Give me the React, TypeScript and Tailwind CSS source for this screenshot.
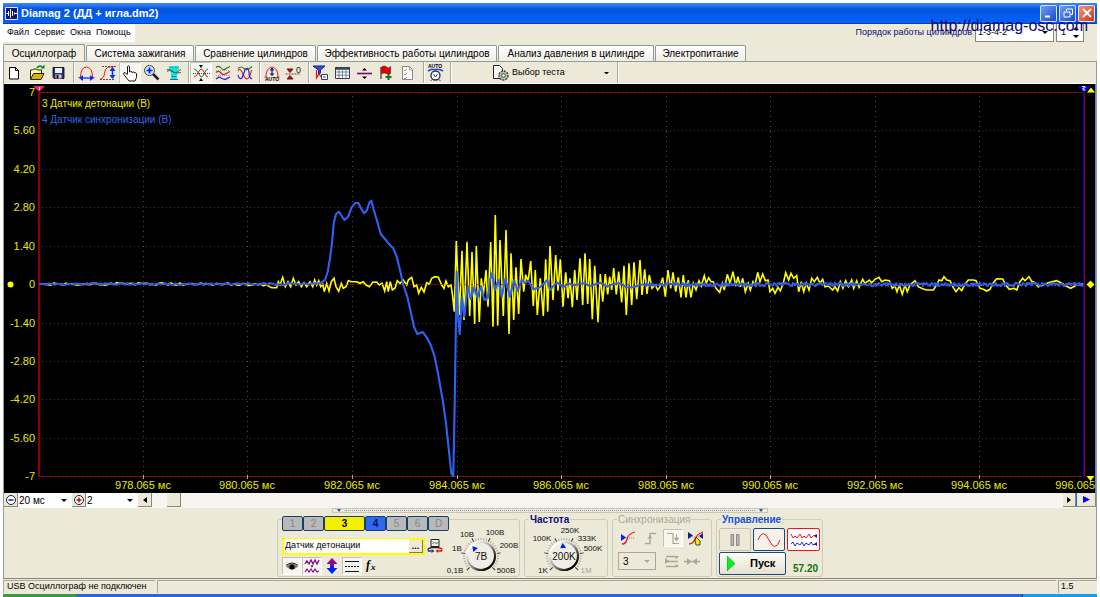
import type { ReactNode } from "react";
import { clsx } from "clsx";

type Pt = [number, number];

/* Samples are stored in thirds of a pixel, relative to an origin on the plot. */
const decode = (ox: number, oy: number, data: string): Pt[] =>
  data
    .trim()
    .split(/\s+/)
    .map((pair) => {
      const [x, y] = pair.split(",").map(Number);
      return [ox + x / 3, oy + y / 3];
    });

const noise = (from: number, to: number, mid: number, amp: number, step: number): Pt[] => {
  const out: Pt[] = [];
  let seed = 7;
  for (let x = from; x <= to; x += step) {
    seed = (seed * 73 + 41) % 997;
    out.push([x, mid + (seed / 997 - 0.5) * 2 * amp]);
  }
  return out;
};

const join = (pts: Pt[]) => pts.map(([x, y]) => `${x.toFixed(1)},${y.toFixed(1)}`).join(" ");

const knock = join([
  ...noise(39, 258, 284, 1.4, 3),
  ...decode(260, 190, "0,282 10,287 20,285 35,293 50,293 55,275 60,285 68,262 76,290 84,275 92,290 100,265 108,285 116,275 124,290 132,278 140,290 150,275 158,290 164,270 170,285 176,272 182,290 188,283 193,305 200,280 207,303 214,275 222,265 228,290 236,304 244,280 250,295 258,290 265,272 275,275 290,275 300,280 310,275 318,285 328,290 338,277 350,276 358,285 366,280 374,303 380,275 385,305 391,275 397,300 405,295 412,272 420,280 430,270 440,285 445,270 455,262 462,290 470,285 476,310 484,292 492,306 500,278 508,283 515,265 525,260 535,262 545,285"),
  ...decode(440, 200, "12,265 18,243 25,260 33,255 38,290 43,335 49,123 58,345 66,152 72,360 81,125 89,348 96,156 104,372 109,138 118,366 124,235 130,285 138,210 144,320 152,126 159,380 166,45 173,377 180,120 190,348 198,90 207,402 213,160 221,360 228,202 236,342 243,177 251,275 257,224 264,245 272,183 280,318 286,210 292,345 301,235 310,348 317,178 323,335 330,138 339,300 347,165 354,272 361,178 369,320 377,217 384,295 390,235 397,322 404,210 411,300 420,175 428,315 435,160 443,312 449,177 457,358 464,197 474,367 481,222 488,305 496,222 503,283 509,230 515,270 521,204 529,283 536,215 545,307 552,197 559,345 567,190 575,315 582,187 590,298"),
  ...decode(640, 240, "0,60 6,165 14,88 21,162 28,105 36,145 46,135 53,150 60,140 68,113 76,170 84,90 92,145 99,97 107,155 115,112 123,172 130,105 138,172 145,120 153,172 160,130 168,150 177,122 184,138 193,107 199,130 206,113 213,125 220,125 228,145 239,157 247,130 253,150 262,103 270,130 279,95 287,138 294,110 301,140 308,115 316,155 325,130 331,150 339,125 345,135 353,97 360,125 368,102 376,122 384,120 390,155 398,145 405,160 414,142 421,152 430,130 437,98 446,120 453,100 461,115 470,107 476,155 484,125 491,155 499,130 507,150 515,115 523,125 532,112 540,130 548,118 555,140 565,138 578,150 585,140 593,153 601,125 609,145 617,122 625,140 635,120 641,145 650,122 657,142 668,118 675,130 688,120 695,128 705,118 717,112 725,125 735,120 748,122 757,145 765,138 771,155 778,135 787,163 795,135 802,155 810,135 825,122 835,140 848,146 860,150 880,150 890,135 897,120 905,122 912,110 920,120 930,122 938,140 948,155 957,143 965,152 975,133 985,120 1000,120 1008,122 1020,145 1030,148 1040,153 1050,148 1060,128 1070,116 1088,117 1097,135 1108,148 1122,145 1130,150 1140,125 1148,115 1155,122 1167,110 1175,124 1185,128 1195,140 1210,135 1225,128 1250,122 1265,130 1278,138 1292,145 1310,135 1330,132"),
]);

const sync = join([
  ...noise(39, 316, 284, 0.9, 2),
  ...decode(260, 190, "180,280 195,270 203,245 210,205 216,160 221,100 228,72 237,65 245,78 253,90 263,82 275,52 285,40 295,38 303,55 312,70 320,62 328,38 334,32 340,55 352,95 362,132 375,147 388,163 400,175 410,200 420,240 430,285 442,320 452,365 462,410 472,432 488,426 500,442 512,465 524,500 535,555 548,630 558,700 566,775 574,850 580,858 584,640"),
  ...decode(440, 200, "50,215 54,345 59,402 66,290 73,350 83,258 92,297 103,262 112,293 123,258 133,300 143,295 150,240 156,220 165,270 175,240 185,290 196,237 210,290 222,240 233,272 245,240 255,250 265,242 280,268 300,262 312,250 322,240 330,270 340,258 352,248 370,262 385,250 400,256 430,250 450,258 480,248 500,260 520,252 540,250 560,262 580,262 600,255"),
  ...noise(642, 1083, 284.5, 1.7, 1),
]);

const columns = [143, 247, 352, 457, 561, 666, 770, 875, 979];
const times = ["978.065", "980.065", "982.065", "984.065", "986.065", "988.065", "990.065", "992.065", "994.065"];
const levels: [string, number][] = [
  ["7", 92], ["5.60", 130], ["4.20", 169], ["2.80", 207], ["1.40", 246], ["0", 284],
  ["-1.40", 323], ["-2.80", 361], ["-4.20", 399], ["-5.60", 438], ["-7", 476],
];

function Plot() {
  return (
    <svg viewBox="4 84 1092 409" className="block h-auto w-full bg-black" role="img" aria-label="Осциллограмма">
      <g stroke="#4c4c4c" strokeDasharray="1 4">
        {columns.map((x) => <path key={x} d={`M${x + 0.5} 96V476`} />)}
      </g>
      <g stroke="#383838" strokeDasharray="1 3">
        {levels.slice(1, 10).map(([l, y]) => <path key={l} d={`M42 ${y + 0.5}H1082`} />)}
      </g>
      <path d="M39 284.5H1084" stroke="#a00000" strokeDasharray="4 2" />
      <path d="M39 92.5H1084M39 476.5H1084" stroke="#8a0000" />
      <path d="M39 92.5H1084M39 476.5H1084" stroke="#555" strokeDasharray="1 3" opacity=".6" />
      <path d="M39 92V477" stroke="#900000" strokeWidth="2" />
      <g stroke="#aaa">
        {columns.map((x) => <path key={x} d={`M${x + 0.5} 475v4`} />)}
      </g>
      <path d="M1083.5 90V477" stroke="#0000d0" />
      <path d="M1084.5 90V477" stroke="#900000" />
      <polyline points={knock} fill="none" stroke="#ffff00" strokeWidth="1.6" />
      <polyline points={sync} fill="none" stroke="#2f62f4" strokeWidth="2.1" strokeLinejoin="round" />
      <path d="M39 284.5H1084" stroke="#a00000" strokeDasharray="2 4" opacity=".6" />
      <path d="M33 86h12l-6 6z" fill="#f0246c" />
      <path d="M39.5 87v3" stroke="#fff" />
      <path d="M1078 86h12l-6 6z" fill="#0000ff" />
      <path d="M1082 86.500h3v1.500h-2v2h2.500" stroke="#fff" fill="none" strokeWidth=".9" />
      <path d="M1087 92.500h8l-4-5zM1086.500 476h8l-4 5z" fill="#ff0" />
      <circle cx="10.500" cy="284.500" r="3" fill="#ff0" />
      <path d="M1090.500 280.500l4 4-4 4-4-4z" fill="#ff0" />
      <g fill="#e9e900" fontFamily="'Liberation Sans', sans-serif" fontSize="11">
        {levels.map(([l, y]) => (
          <text key={l} x="35" y={y + 4} textAnchor="end">{l}</text>
        ))}
        {times.map((t, i) => (
          <text key={t} x={columns[i]} y="489" textAnchor="middle">{t} мс</text>
        ))}
        <text x="1095" y="489" textAnchor="end">996.065</text>
      </g>
      <g fontFamily="'Liberation Sans', sans-serif" fontSize="10">
        <text x="42" y="107" fill="#e9e900">3 Датчик детонации (В)</text>
        <text x="42" y="123" fill="#3464e8">4 Датчик синхронизации (В)</text>
      </g>
      <path d="M1095.500 84V493" stroke="#5d86d8" />
    </svg>
  );
}

function Tool({ label, pressed, children }: { label: string; pressed?: boolean; children: ReactNode }) {
  return (
    <button
      type="button"
      aria-label={label}
      className={clsx("h-[22px] w-[22px] shrink-0", pressed && "border border-[#c9c6b6] border-r-white border-b-white bg-[#f7f6f0]")}
    >
      <svg viewBox="0 0 22 22" className={clsx("h-[22px] w-[22px]", pressed && "-m-px")} fill="none">
        {children}
      </svg>
    </button>
  );
}

const Sep = () => (
  <span className="flex h-[21px] w-[5px] shrink-0 justify-end">
    <span className="w-[2px] border-l border-[#aca899] bg-white" />
  </span>
);

function Toolbar() {
  return (
    <div className="flex h-[23px] items-start border-t border-b border-t-[#919b9c] border-b-white bg-[#ece9d8]">
      <Tool label="Новый">
        <path d="M5.500 5.500h6l3 3v8.500h-9z" fill="#fff" stroke="#000" />
        <path d="M11.500 5.500v3h3" stroke="#000" />
      </Tool>
      <Tool label="Открыть">
        <path d="M4.500 17V8h2l1-1h3l1 1h4v3" fill="#fff6a0" stroke="#222" />
        <path d="M4.500 17.500l3-6h10.500l-3 6z" fill="#d8b400" stroke="#222" />
        <path d="M11 6q2-3 5-1.500" stroke="#087a20" strokeWidth="1.500" />
        <path d="M14.500 6.500h4v-4z" fill="#087a20" />
      </Tool>
      <Tool label="Сохранить">
        <path d="M5 5.500h11V16.500H6l-1-1z" fill="#30327a" stroke="#000" strokeWidth=".8" />
        <path d="M7 6h7v5H7z" fill="#e8f0ff" />
        <path d="M7.500 12.500h6v4h-6z" fill="#ccc" />
        <path d="M8.500 13h2v3.500h-2z" fill="#111" />
      </Tool>
      <Sep />
      <Tool label="Длительность">
        <path d="M3.500 15.500h2q0-10 6-10.500 6 .500 6 10.500h2" stroke="#f01818" />
        <path d="M5 16h13" stroke="#0030ff" strokeWidth="1.300" />
        <path d="M8 13L4 16l4 3zM15 13l4 3-4 3z" fill="#0030ff" />
      </Tool>
      <Tool label="Амплитуда">
        <path d="M5 4.500h14M3 17.500h14" stroke="#555" strokeDasharray="2 1" />
        <path d="M3 17q4 0 4.500-5.500T12 5h5" stroke="#f01818" />
        <path d="M15.500 6v10" stroke="#0030ff" strokeWidth="1.500" />
        <path d="M12.500 9l3-4 3 4zM12.500 13l3 4 3-4z" fill="#0030ff" />
      </Tool>
      <Tool label="Рука" pressed>
        <path d="M8.500 12V4.500q1-1.500 2 0V10q1-1.500 2.500 0v.500q1-1.200 2.500 0v.500q1.500-.800 2 .500v4l-1.500 3.500h-6L6 14q-2.500-2.500-1-3.300t3.500 2.300" fill="#fff" stroke="#000" strokeWidth=".9" />
      </Tool>
      <Tool label="Увеличить">
        <path d="M12 12l5.500 5.500" stroke="#222" strokeWidth="2.500" />
        <circle cx="8.500" cy="8.500" r="5" fill="#c8e8ff" stroke="#444" />
        <path d="M5.500 8.500h6M8.500 5.500v6" stroke="#0020e0" strokeWidth="1.700" />
      </Tool>
      <Tool label="Фильтр сигнала">
        <path d="M6 4h10v3l-2 4v6H8v-6L6 7z" fill="#18e0e8" />
        <path d="M4 9.500q3-3 5.500 0t8.500-2" stroke="#e02020" />
        <path d="M4 7.500q3 0 5.500 2t8.500 1" stroke="#108030" strokeWidth="1.200" />
        <path d="M7 17.500h8M8.500 5.500h1M12.500 5.500h1M9 14.500h4" stroke="#057a90" />
      </Tool>
      <Sep />
      <Tool label="Свести лучи" pressed>
        <path d="M4 7q2 0 4 3.500T11 15q2 0 3.500-4T18 7" stroke="#168030" />
        <path d="M4 15q2 0 4-4t3-4q2 0 3.500 4t3.500 4" stroke="#f02020" />
        <path d="M3 11.500h17" stroke="#444" strokeDasharray="1 1" />
        <path d="M9 3h4l-2 3zM9 19h4l-2-3z" fill="#000" />
      </Tool>
      <Tool label="Развести лучи">
        <path d="M4 5.500q2.500-2.500 5 .500t5 .500l4-2" stroke="#168030" strokeWidth="1.100" />
        <path d="M4 10.500q2.500-2.500 5 .500t5 .500l4-2" stroke="#f02020" strokeWidth="1.300" />
        <path d="M4 17l3-2 3 1.500 3 1 5-2.500" stroke="#2020e0" strokeWidth="1.200" />
        <path d="M4 8.500h14M4 13.500h14" stroke="#888" strokeDasharray="1 1" strokeWidth=".7" />
      </Tool>
      <Tool label="Наложить лучи">
        <path d="M4 6.500q3-3 6 0t8-2" stroke="#168030" strokeWidth="1.100" />
        <path d="M4 9q2-4 4.500 2t4.500 6q3-1 4.500-9" stroke="#f02020" strokeWidth="1.200" />
        <path d="M4 13q1 5 4 3l3-8q3-4 4 2 0 6 3 7" stroke="#2020e0" strokeWidth="1.200" />
      </Tool>
      <Sep />
      <Tool label="Автомасштаб">
        <path d="M3.500 15h1.500q0-9 6-10 6 1 6 10h1.500" stroke="#f02020" />
        <path d="M11 6v7" stroke="#102090" strokeWidth="1.200" />
        <path d="M8.500 8.500L11 5.500l2.500 3zM8.500 11.500h5L11 14z" fill="#102090" />
        <text x="4" y="19" fontSize="5" fontWeight="bold" fill="#000" fontFamily="Liberation Sans">AUTO</text>
      </Tool>
      <Tool label="Установить ноль">
        <path d="M4 7h6l-3 3.500zM4 17h6l-3-3.500z" fill="#a01010" stroke="#8c1010" />
        <path d="M2.500 12h15" stroke="#444" strokeDasharray="2 1" />
        <text x="13" y="11" fontSize="9" fill="#222" fontFamily="Liberation Sans">0</text>
      </Tool>
      <Sep />
      <Tool label="Отбор">
        <path d="M3 4h12l-4.500 4v3l-2 1V8z" fill="#3048f0" stroke="#102090" />
        <path d="M6.500 8v8l2.500-4 3 4 1-4" stroke="#e01010" strokeWidth="1.200" />
        <path d="M11.500 12.500h6v5h-6z" fill="#fff" stroke="#204080" />
        <path d="M13 15h3" stroke="#555" />
      </Tool>
      <Tool label="Таблица">
        <path d="M3.500 5.500h14v11h-14z" fill="#fff" stroke="#2d4354" />
        <path d="M3 6.500h15" stroke="#2d4354" strokeWidth="2.500" />
        <path d="M7 6v10M10.500 6v10M14 6v10M3.500 10h14M3.500 13.200h14" stroke="#557085" strokeWidth=".8" />
      </Tool>
      <Tool label="Разделитель">
        <path d="M3 11.500h15" stroke="#800080" strokeWidth="1.600" />
        <path d="M8 8.500h5L10.500 6zM8 14.500h5L10.500 17z" fill="#000" />
      </Tool>
      <Tool label="Флаг">
        <path d="M5 5v12" stroke="#333" strokeWidth="1.200" />
        <path d="M5.500 5q3-2 5 0t4-.500v7q-2 1-4 0t-5 0z" fill="#e40000" stroke="#701010" strokeWidth=".6" />
        <path d="M9.500 15h6M12.500 12v6" stroke="#087a20" strokeWidth="2" />
      </Tool>
      <Tool label="Отчёт">
        <path d="M4.500 4.500h7l3 3v10h-10z" fill="#f8f8f8" stroke="#888" />
        <path d="M6 8l1 1 2-2M6 12l1 1 2-2M6 16l1 1 2-2M11.500 5v3h3" stroke="#888" strokeWidth=".8" />
      </Tool>
      <Sep />
      <Tool label="Автоизмерение">
        <text x="3" y="6" fontSize="5" fontWeight="bold" fill="#000" fontFamily="Liberation Sans">AUTO</text>
        <path d="M3 9l3-1.500h9L18 9" stroke="#2040e0" strokeWidth="1.500" />
        <circle cx="10.500" cy="13.500" r="4.500" fill="#fff" stroke="#234" strokeWidth="1.300" />
        <path d="M8.500 12l2 3 2-3M7 17.500L5.500 19M14 17.500l1.500 1.500" stroke="#2040e0" />
      </Tool>
      <Sep />
      <label className="ml-10 flex h-[22px] w-[122px] items-center">
        <svg viewBox="0 0 18 18" className="mr-[2px] h-[18px] w-[18px]" fill="none">
          <path d="M1.500 1.500h6l3 3v10h-9z" fill="#fff" stroke="#222" />
          <circle cx="11.500" cy="11.500" r="4.500" fill="#b8c4b0" stroke="#3c4c3c" strokeDasharray="2 1" strokeWidth="1.500" />
          <circle cx="11.500" cy="11.500" r="1.800" fill="#fff" stroke="#3c4c3c" />
        </svg>
        <Combo label="Тест" options={["Выбор теста"]} className="grow text-[9px]" arrow="right-[5px] w-[5px]" />
      </label>
      <Sep />
    </div>
  );
}

function Combo({ label, options, className, arrow, disabled }: { label: string; options: string[]; className?: string; arrow?: string; disabled?: boolean }) {
  return (
    <span className={clsx("relative flex h-full items-center", className)}>
      <select aria-label={label} disabled={disabled} className="h-full w-full appearance-none bg-transparent text-black outline-none">
        {options.map((o) => <option key={o}>{o}</option>)}
      </select>
      <svg viewBox="0 0 6 3" className={clsx("pointer-events-none absolute", arrow ?? "right-[5px] w-[6px]")}>
        <path d="M0 0h6L3 3z" fill={disabled ? "#aca899" : "#000"} />
      </svg>
    </span>
  );
}

const tabs: [string, string][] = [
  ["Система зажигания", "w-[108px]"],
  ["Сравнение цилиндров", "w-[121px]"],
  ["Эффективность работы цилиндров", "w-[180px]"],
  ["Анализ давления в цилиндре", "w-[156px]"],
  ["Электропитание", "w-[91px]"],
];

function WinButton({ label, close, children }: { label: string; close?: boolean; children: ReactNode }) {
  return (
    <button
      type="button"
      aria-label={label}
      className={clsx(
        "flex h-[17px] w-[17px] items-center justify-center rounded-[2px] border border-white/80",
        close ? "bg-linear-to-br from-[#f0937a] to-[#c93312]" : "bg-linear-to-br from-[#6f9cf5] to-[#1a48c8]",
      )}
    >
      <svg viewBox="0 0 12 12" className="h-3 w-3" fill="none" stroke="#fff">{children}</svg>
    </button>
  );
}

function Group({ title, titleClass, className, children }: { title?: string; titleClass?: string; className: string; children: ReactNode }) {
  return (
    <section className={clsx("relative h-[58px] shrink-0 rounded-[3px] border border-[#cfccba]", className)}>
      {title && (
        <h2 className={clsx("absolute -top-[5px] left-[4px] bg-[#ece9d8] px-px text-[10px] leading-[10px]", titleClass)}>{title}</h2>
      )}
      {children}
    </section>
  );
}

type DialLabel = { t: string; x: number; y: number; dim?: boolean };

function Dial({ label, value, marks, cx, width, pointer, className }: { label: string; value: string; marks: DialLabel[]; cx: number; width: number; pointer: number; className: string }) {
  const cy = 36;
  const ticks = Array.from({ length: 31 }, (_, i) => -135 + i * 9);
  return (
    <label className={clsx("relative block", className)}>
      <input type="range" aria-label={label} className="absolute inset-0 h-full w-full opacity-0" />
      <svg viewBox={`0 0 ${width} 57`} className="pointer-events-none block w-full">
        <defs>
          <linearGradient id={`ring-${cx}`} x1="0" y1="0" x2="1" y2="1">
            <stop offset="0.150" stopColor="#fff" />
            <stop offset="0.500" stopColor="#999" />
            <stop offset="0.850" stopColor="#000" />
          </linearGradient>
        </defs>
        {ticks.map((a, i) => (
          <path key={a} d={`M${cx} ${cy - 16}v${i % 6 ? -2 : -4}`} stroke={i % 6 ? "#aaa797" : "#333"} strokeWidth={1} transform={`rotate(${a} ${cx} ${cy})`} />
        ))}
        <circle cx={cx} cy={cy} r="14" fill="#f0eee4" stroke={`url(#ring-${cx})`} strokeWidth="2.200" />
        <path d={`M${cx - 3} ${cy - 8}h6l-3-5z`} fill="#0018ff" transform={`rotate(${pointer} ${cx} ${cy})`} />
        <g fontFamily="'Liberation Sans', sans-serif" textAnchor="middle" fill="#111">
          <text x={cx} y={cy + 4} fontSize="10">{value}</text>
          {marks.map((m) => (
            <text key={m.t} x={m.x} y={m.y} fontSize="8" fill={m.dim ? "#aaa797" : "#111"}>{m.t}</text>
          ))}
        </g>
      </svg>
    </label>
  );
}

const channels: [string, string][] = [
  ["1", "w-[21px] bg-[#b9b9b9] text-[#888]"],
  ["2", "w-[21px] bg-[#b9b9b9] text-[#888]"],
  ["3", "w-[41px] bg-[#f4ee00] font-bold text-black"],
  ["4", "w-[21px] bg-[#2f66f4] font-bold text-[#001050]"],
  ["5", "w-[21px] bg-[#b9b9b9] text-[#888]"],
  ["6", "w-[21px] bg-[#b9b9b9] text-[#888]"],
  ["D", "w-[21px] bg-[#b9b9b9] text-[#888]"],
];

function Glyph({ label, pressed, className, children }: { label: string; pressed?: boolean; className?: string; children: ReactNode }) {
  return (
    <button
      type="button"
      aria-label={label}
      className={clsx("flex h-[18px] w-[20px] items-center justify-center", pressed && "border border-[#c4c1b0] border-r-white border-b-white bg-[#f6f5ee]", className)}
    >
      <svg viewBox="0 0 18 16" className="h-4 w-[18px] shrink-0" fill="none">{children}</svg>
    </button>
  );
}

function ChannelGroup() {
  return (
    <Group className="flex w-[243px]">
      <div className="ml-[4px] flex w-[160px] flex-col">
        <div className="-mt-[4px] flex h-[15px] w-[167px] bg-[#ece9d8]">
          {channels.map(([n, c]) => (
            <button key={n} type="button" className={clsx("h-[15px] shrink-0 rounded-[2px] border border-[#16406a] text-[10px] leading-[12px]", c)}>{n}</button>
          ))}
        </div>
        <div className="mt-[6px] flex items-center">
          <div className="flex h-[17px] w-[143px] shrink-0 items-center border-2 border-[#ffff00] bg-white">
            <input aria-label="Имя канала" defaultValue="Датчик детонации" className="min-w-0 grow bg-white pl-px text-[9px] text-black outline-none" />
            <button type="button" className="flex h-[13px] w-[14px] items-center justify-center border-r border-b border-[#777] bg-[#ece9d8] text-[9px] leading-[6px] font-bold text-black">...</button>
          </div>
          <Glyph label="Датчик" className="shrink-0">
            <path d="M5 1.500h8v7H5z" fill="#eee" stroke="#222" />
            <path d="M6.500 6l2-2 2 2 1-2" stroke="#22a040" />
            <path d="M4.500 9.500h9" stroke="#222" strokeWidth="1.500" />
            <path d="M5 10q-4 0-2.500 3h3" stroke="#203080" strokeWidth="1.300" />
            <path d="M13 10q4 0 2.500 3h-3" stroke="#f01010" strokeWidth="1.300" />
            <path d="M5.500 11v4l3-2z" fill="#203080" />
            <path d="M12.500 11v4l-3-2z" fill="#f01010" />
          </Glyph>
        </div>
        <div className="mt-[2px] flex">
          <Glyph label="Видимость" pressed>
            <path d="M3 8.500q6-6 12 0-6 6-12 0z" fill="#777" />
            <circle cx="9" cy="9" r="2.500" fill="#000" />
            <path d="M3 7.500q6-5 12 0" stroke="#222" />
          </Glyph>
          <Glyph label="Сигналы" pressed>
            <path d="M2 6l2-3 2 3 2-4 2 4 2-4 2 4 2-4" stroke="#8c0a8c" strokeWidth="1.300" />
            <path d="M2 14l2-3 2 3 2-3 2 3 2-3 2 3 2-1" stroke="#8c0a8c" strokeWidth="1.200" />
            <path d="M7.500 7.500h3L9 9.500z" fill="#000" />
          </Glyph>
          <Glyph label="Смещение">
            <path d="M9 0l5.500 6H11v2H7V6H3.500z" fill="#8c0a8c" />
            <path d="M9 16l5.500-6H11V8H7v2H3.500z" fill="#0020ff" />
          </Glyph>
          <Glyph label="Линии" pressed>
            <path d="M2 3.500h14M2 13.500h14" stroke="#111" />
            <path d="M2 8.500h14" stroke="#111" strokeDasharray="2 1" />
          </Glyph>
          <Glyph label="Функция">
            <text x="3" y="11" fontSize="12" fontWeight="bold" fontStyle="italic" fill="#000" fontFamily="Liberation Serif">f</text>
            <text x="8" y="12" fontSize="9" fontWeight="bold" fontStyle="italic" fill="#000" fontFamily="Liberation Serif">x</text>
          </Glyph>
        </div>
      </div>
      <Dial
        className="w-[77px]"
        label="Предел измерения"
        value="7В"
        width={77}
        cx={39}
        pointer={-42}
        marks={[
          { t: "0,1В", x: 13, y: 53 }, { t: "1В", x: 15, y: 31 }, { t: "10В", x: 25, y: 17 },
          { t: "100В", x: 53, y: 15 }, { t: "200В", x: 67, y: 28 }, { t: "500В", x: 64, y: 53 },
        ]}
      />
    </Group>
  );
}

function ControlPanel() {
  return (
    <div className="flex h-[70px] flex-col items-center bg-[#ece9d8]">
      <div className="flex h-[5px] w-[436px] shrink-0 items-center justify-between border border-[#c9c6b6] px-1">
        <svg viewBox="0 0 4 3" className="w-1"><path d="M0 0h4L2 3z" fill="#1858b8" /></svg>
        <span className="mx-1 grow border-t border-dotted border-[#7f9fc4]" />
        <svg viewBox="0 0 4 3" className="w-1"><path d="M0 0h4L2 3z" fill="#1858b8" /></svg>
      </div>
      <div className="mt-[6px] flex justify-center gap-[4px]">
        <ChannelGroup />
        <Group title="Частота" titleClass="font-bold text-[#0a0a78]" className="w-[84px]">
          <Dial
            className="w-[82px]"
            label="Частота"
            value="200K"
            width={82}
            cx={39}
            pointer={-6}
            marks={[
              { t: "1K", x: 18, y: 53 }, { t: "100K", x: 17, y: 21 }, { t: "250K", x: 45, y: 13 },
              { t: "333K", x: 62, y: 21 }, { t: "500K", x: 68, y: 31 }, { t: "1M", x: 61, y: 53, dim: true },
            ]}
          />
        </Group>
        <Group title="Синхронизация" titleClass="text-[#aca899]" className="flex w-[100px] flex-col gap-[5px] px-[5px] pt-[9px]">
          <div className="flex justify-between">
            <Glyph label="Фронт">
              <path d="M2 8h14" stroke="#888" strokeDasharray="1 1" />
              <path d="M3 14q4 0 5-5t8-7" stroke="#f01818" strokeWidth="1.300" />
              <path d="M2 4l5 3.500-5 3.500z" fill="#0020ff" />
            </Glyph>
            <Glyph label="Нарастание">
              <path d="M3 13.500h5v-10h6" stroke="#aca899" strokeWidth="1.400" />
              <path d="M5.500 8.500h5L8 5z" fill="#aca899" />
            </Glyph>
            <Glyph label="Спад" pressed>
              <path d="M3 3.500h6v10h6" stroke="#aca899" strokeWidth="1.200" />
              <path d="M12.500 4v6M10.500 8l2 3 2-3z" stroke="#aca899" fill="#aca899" />
            </Glyph>
            <Glyph label="Захват">
              <path d="M1 7h14" stroke="#888" strokeDasharray="1 1" />
              <path d="M2 14q4 0 6-5t8-7" stroke="#f01818" strokeWidth="1.300" />
              <path d="M1 2l5 3.500-5 3.500zM16 3l-4 3 4 3z" fill="#102090" />
              <path d="M9 7l4 4v4h-4l-1-4z" fill="#ffe600" stroke="#222" strokeWidth=".8" />
            </Glyph>
          </div>
          <div className="flex items-center">
            <Combo label="Канал синхронизации" options={["3"]} disabled className="mr-[6px] h-[18px] w-[38px] border border-[#aca899] pl-[4px] text-[10px]" />
            <Glyph label="Уровень">
              <path d="M3 3.500h10M3 8.500h12M3 13.500h10" stroke="#aca899" strokeWidth="1.300" />
              <path d="M2 5l4 3-4 3zM11 3h5l-2.500 3zM11 14h5l-2.500-3z" fill="#aca899" />
            </Glyph>
            <Glyph label="Центр">
              <path d="M1 8.500h16" stroke="#aca899" strokeWidth="1.500" />
              <path d="M4 5l4.500 3.500L4 12zM14 5L9.500 8.500 14 12z" fill="#aca899" />
            </Glyph>
          </div>
        </Group>
        <Group title="Управление" titleClass="font-bold text-[#1552d8]" className="flex w-[107px] flex-col gap-px px-[2px] pt-[8px]">
          <div className="flex gap-[2px]">
            <button type="button" aria-label="Пауза" className="flex h-[23px] w-[32px] items-center justify-center rounded-[2px] border border-[#c4c1b0]">
              <svg viewBox="0 0 10 12" className="h-3 w-[10px]"><path d="M1 .500h2.500v11H1zM6.500.500H9v11H6.500z" fill="#bbb" stroke="#888" /></svg>
            </button>
            <button type="button" aria-label="Синус" className="flex h-[23px] w-[33px] items-center justify-center rounded-[2px] border border-[#1c4a74] bg-[#f4f2ea]">
              <svg viewBox="0 0 24 16" className="h-4 w-6" fill="none"><path d="M1 8Q6-5 12 8t11 0" stroke="#f01818" /></svg>
            </button>
            <button type="button" aria-label="Непрерывно" className="flex h-[23px] w-[33px] items-center justify-center rounded-[2px] border border-[#ff1010] bg-white">
              <svg viewBox="0 0 28 18" className="h-[18px] w-7" fill="none">
                <path d="M1 3l2 4 2-2 2 2 3-4 2 4 2-2 2 2 3-4 2 4 2-2 3-1" stroke="#f01818" />
                <path d="M1 13l2-2 2 4 2-3 3 2 2-3 2 4 2-3 3 2 2-3 2 3 3-1" stroke="#1828e0" />
                <path d="M27 3v4l-3-2zM27 11v4l-3-2z" fill="#102090" />
              </svg>
            </button>
          </div>
          <div className="flex items-end gap-[7px]">
            <button type="button" className="flex h-[23px] w-[67px] items-center rounded-[2px] border border-[#1c4a74] bg-linear-to-b from-[#fdfcf8] to-[#e4e0d0] pl-[7px] text-[11px] font-bold text-black">
              <svg viewBox="0 0 8 15" className="mr-[15px] h-[15px] w-2"><path d="M0 0l8 7.500L0 15z" fill="#00f020" stroke="#009a10" strokeWidth=".6" /></svg>
              Пуск
            </button>
            <output className="text-[10px] leading-[12px] font-bold text-[#107010]">57.20</output>
          </div>
        </Group>
      </div>
    </div>
  );
}

const smallButton = "flex h-[14px] items-center justify-center border-r border-b border-[#8a8778] bg-[#ece9d8]";

function ScrollRow() {
  return (
    <div className="flex h-[15px] items-start bg-[#f6f5ef] text-[10px]">
      <button type="button" aria-label="Сжать" className={clsx(smallButton, "w-[14px]")}>
        <svg viewBox="0 0 12 12" className="h-3 w-3" fill="none"><circle cx="6" cy="6" r="4.500" fill="#fff" stroke="#222" /><path d="M3.500 6h5" stroke="#1020c0" strokeWidth="1.500" /></svg>
      </button>
      <Combo label="Развёртка" options={["20 мс"]} className="h-[14px] w-[54px] bg-white pl-px" />
      <button type="button" aria-label="Растянуть" className={clsx(smallButton, "w-[14px]")}>
        <svg viewBox="0 0 12 12" className="h-3 w-3" fill="none"><circle cx="6" cy="6" r="4.500" fill="#fff" stroke="#222" /><path d="M3.500 6h5M6 3.500v5" stroke="#c01010" strokeWidth="1.500" /></svg>
      </button>
      <Combo label="Масштаб" options={["2"]} className="h-[14px] w-[52px] bg-white pl-px" />
      <button type="button" aria-label="Назад" className={clsx(smallButton, "w-[14px]")}>
        <svg viewBox="0 0 4 6" className="h-[6px] w-1"><path d="M4 0v6L0 3z" fill="#000" /></svg>
      </button>
      <div className="flex h-[14px] grow pl-[15px]">
        <button type="button" aria-label="Ползунок" className={clsx(smallButton, "w-[14px]")} />
      </div>
      <button type="button" aria-label="Вперёд" className={clsx(smallButton, "w-[13px]")}>
        <svg viewBox="0 0 4 6" className="h-[6px] w-1"><path d="M0 0v6l4-3z" fill="#000" /></svg>
      </button>
      <button type="button" aria-label="В конец" className={clsx(smallButton, "w-[20px] border-l border-l-[#1468e0]")}>
        <svg viewBox="0 0 7 7" className="h-[7px] w-[7px]"><path d="M0 0v7l7-3.500z" fill="#0000ff" /></svg>
      </button>
    </div>
  );
}

export default function App() {
  return (
    <div className="relative flex min-h-screen flex-col bg-white px-[3px] pt-[3px] font-['Liberation_Sans',sans-serif] text-[9px] text-black">
      <header className="flex h-[21px] items-center gap-[2px] border-b border-[#0a3fb0] bg-linear-to-b from-[#3b8bf5] via-[#0453e0] via-30% to-[#0463fa] pr-[2px] pl-[2px]">
        <svg viewBox="0 0 13 13" className="mr-px h-[13px] w-[13px]" fill="none">
          <path d="M.500.500h12v12H.500z" fill="#101870" stroke="#dfe8ff" />
          <path d="M1.500 6.500h2V4v5M5.500 2v9M7.500 4v5M9.500 5.500v2M10 6.500h2" stroke="#fff" />
        </svg>
        <h1 className="grow text-[11px] font-bold text-white">Diamag 2 (ДД + игла.dm2)</h1>
        <WinButton label="Свернуть"><path d="M2 9.500h5" strokeWidth="2" /></WinButton>
        <WinButton label="Восстановить"><path d="M4.500 4V2h6v5.500h-2M2 5h6v5H2z" /></WinButton>
        <WinButton label="Закрыть" close><path d="M2 2l8 8M10 2l-8 8" strokeWidth="1.800" /></WinButton>
      </header>

      <div className="flex h-[20px] items-start justify-between bg-[#ece9d8]">
        <nav className="flex h-[18px] items-center gap-[5px] bg-white px-[4px]">
          {["Файл", "Сервис", "Окна", "Помощь"].map((m) => <button key={m} type="button">{m}</button>)}
        </nav>
        <div className="flex h-[18px] items-center gap-[2px] pr-[13px]">
          <span className="mr-px text-[#0a0a78]">Порядок работы цилиндров</span>
          <Combo label="Порядок работы цилиндров" options={["1-3-4-2"]} className="w-[79px] border border-t-0 border-[#8a8778] bg-white pl-[2px]" />
          <span className="flex h-full w-[28px] items-center border border-t-0 border-[#8a8778] bg-white pl-[4px]">
            <input aria-label="Цилиндр" defaultValue="1" className="w-3 min-w-0 outline-none" />
            <svg viewBox="0 0 6 11" className="h-[11px] w-[6px]"><path d="M0 3h6L3 0zM0 8h6l-3 3z" fill="#000" /></svg>
          </span>
        </div>
      </div>

      <nav className="flex h-[17px] items-end bg-[#ece9d8] text-[10px]">
        <button type="button" className="-mb-px h-[18px] w-[82px] rounded-t-[2px] border border-b-0 border-[#919b9c] bg-[#f1efe4]">Осциллограф</button>
        {tabs.map(([t, w]) => (
          <button key={t} type="button" className={clsx("ml-px h-4 rounded-t-[2px] border border-b-0 border-[#919b9c] bg-linear-to-b from-white to-[#f0eee4] whitespace-nowrap", w)}>{t}</button>
        ))}
      </nav>

      <main className="border-x border-[#919b9c] text-[9px]">
        <Toolbar />
        <Plot />
        <ScrollRow />
        <ControlPanel />
      </main>

      <footer className="flex h-4 items-center justify-between border-t border-[#8a8778] bg-[#ece9d8]">
        <span className="flex h-[13px] w-[152px] items-center border-t border-l border-[#aca899] pl-[3px]">USB Осциллограф не подключен</span>
        <span className="ml-[2px] h-[13px] grow border-t border-l border-[#aca899]" />
        <span className="ml-[2px] flex h-[13px] w-[39px] items-center border-t border-l border-[#aca899] pl-[2px]">1.5</span>
      </footer>
      <div className="flex h-[3px] bg-[#2a66de]">
        <span className="w-[74px] rounded-tr-[3px] bg-[#3a9a3c]" />
        <span className="grow" />
        <span className="w-[75px] border-l border-[#0a3a90] bg-[#12a0ee]" />
      </div>

      <a href="http://diamag-osc.com" className="absolute top-[17px] right-[12px] text-[16px] leading-[18px] text-[#0a0a78]">http://diamag-osc.com</a>
    </div>
  );
}
